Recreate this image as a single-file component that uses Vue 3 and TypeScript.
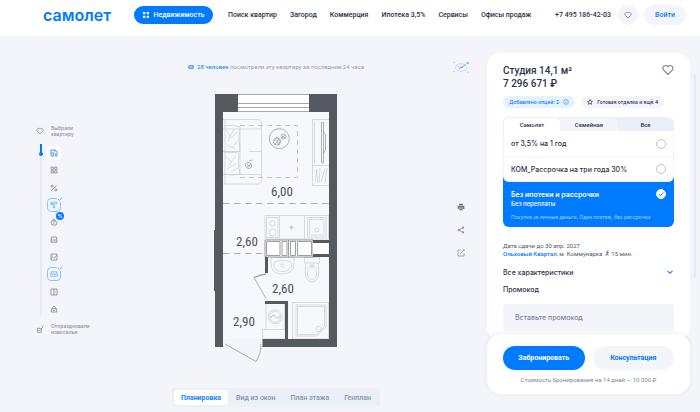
<script setup lang="ts">
import { ref } from 'vue'

const nav: string[] = ['Поиск квартир', 'Загород', 'Коммерция', 'Ипотека 3,5%', 'Сервисы', 'Офисы продаж']
const views: string[] = ['Планировка', 'Вид из окон', 'План этажа', 'Генплан']
const programs: string[] = ['Самолет', 'Семейная', 'Все']
const payments: string[] = ['от 3,5% на 1 год', 'КОМ_Рассрочка на три года 30%']

const view = ref('Планировка')
const program = ref('Самолет')
const payment = ref('full')
const promo = ref('')

interface Step { id: string; label: string; state?: 'current' | 'done'; badge?: boolean; d: string }
const steps: Step[] = [
  { id: 'plan', label: 'Планировка', state: 'current', d: 'M5 10.5H1.5V1.5H7V4M1.5 6H5M7 6.5H5V10.5M7 1.5L10.5 4V10.5H8V7' },
  { id: 'grid', label: 'Варианты', d: 'M1.5 1.5H5V5H1.5ZM7 1.5H10.5V5H7ZM1.5 7H5V10.5H1.5ZM7 7H10.5V10.5H7Z' },
  { id: 'percent', label: 'Ипотека', d: 'M10 2L2 10M3.2 1.6A1.6 1.6 0 1 0 3.2 4.8A1.6 1.6 0 1 0 3.2 1.6M8.8 7.2A1.6 1.6 0 1 0 8.8 10.4A1.6 1.6 0 1 0 8.8 7.2' },
  { id: 'finish', label: 'Отделка', state: 'done', d: 'M2.5 1.5H10.5V4H2.5ZM2.5 2.7H1V5.5H6V7M5 7H7V10.5H5Z' },
  { id: 'bonus', label: 'Выгода', badge: true, d: 'M3 4.5H9L10.5 7L9 10.5H3L1.5 7ZM4 4.5L5 2H7L8 4.5M4.5 7.5H7.5' },
  { id: 'transport', label: 'Транспорт', d: 'M2.5 1.5H9.5L10.5 7V9H1.5V7ZM1.5 6H10.5M3 9V10.8M9 9V10.8' },
  { id: 'view', label: 'Вид из окна', d: 'M1.5 1.5H10.5V10.5H1.5ZM1.5 8L4.5 5.5L6.5 7.5L10 3.5M3 3.5H4' },
  { id: 'furniture', label: 'Мебель', state: 'done', d: 'M2 5V2.5H10V5M1 5H3V7H9V5H11V9.5H1ZM6 2.5V7' },
  { id: 'door', label: 'Вход', d: 'M1.5 1.5H10.5V10.5H1.5ZM6 1.5V10.5M7.8 6H8.6' },
  { id: 'deal', label: 'Сделка', d: 'M2 5.5H10V10.5H2ZM4 5.5V3.5L6 1.5L8 3.5V5.5M4.5 8H7.5' },
]
</script>

<template>
  <div class="page">
    <header class="header">
      <a class="logo" href="#">самолет</a>
      <button class="estate" type="button">
        <svg class="ico6" viewBox="0 0 6 6" aria-hidden="true"><path fill="#fff" d="M0 0H2.3V2.3H0ZM3.7 0H6V2.3H3.7ZM0 3.7H2.3V6H0ZM3.7 3.7H6V6H3.7Z" /></svg>
        Недвижимость
      </button>
      <nav class="nav">
        <a v-for="item in nav" :key="item" href="#">{{ item }}</a>
      </nav>
      <a class="phone" href="tel:+74951864203">+7 495 186-42-03</a>
      <button class="fav" type="button" aria-label="Избранное">
        <svg class="ico8" viewBox="0 0 12 12" aria-hidden="true"><path class="line" d="M6 10.5L1.8 6.2A2.6 2.6 0 0 1 6 3A2.6 2.6 0 0 1 10.2 6.2Z" /></svg>
      </button>
      <button class="login" type="button">Войти</button>
    </header>

    <main class="main">
      <section class="stage">
        <div class="path">
          <p class="milestone">
            <svg class="ico8" viewBox="0 0 12 12" aria-hidden="true"><path class="line" d="M6 10.5L1.8 6.2A2.6 2.6 0 0 1 6 3A2.6 2.6 0 0 1 10.2 6.2Z" /></svg>
            <span>Выбрали<br>квартиру</span>
          </p>
          <div class="track">
            <div class="rail"><span class="progress"></span></div>
            <ol class="steps">
              <li v-for="s in steps" :key="s.id">
                <button type="button" class="step" :class="s.state" :aria-label="s.label">
                  <svg class="ico8" viewBox="0 0 12 12" aria-hidden="true"><path class="line" :d="s.d" /></svg>
                  <svg v-if="s.state === 'done'" class="tick" viewBox="0 0 6 6" aria-hidden="true"><path d="M1 3L2.5 4.5L5.5 1" /></svg>
                  <span v-if="s.badge" class="badge">%</span>
                </button>
              </li>
            </ol>
          </div>
          <p class="milestone">
            <svg class="ico8" viewBox="0 0 12 12" aria-hidden="true"><path class="line" d="M2 5H8V11H2ZM3.5 7.5L5 9L10 3.5M8.5 1.5L10.5 3.5M11 1V2" /></svg>
            <span>Отпраздновали<br>новоселье</span>
          </p>
        </div>

        <div class="viewer">
          <p class="watchers">
            <svg class="ico6" viewBox="0 0 6 6" aria-hidden="true"><ellipse cx="3" cy="3" rx="2.9" ry="2.3" fill="#4a9dfb" /><circle cx="3" cy="3" r="1.2" fill="none" stroke="#f4f5fb" stroke-width=".6" /></svg>
            <span><b>28 человек</b> посмотрели эту квартиру за последние 24 часа</span>
          </p>

          <svg class="plan" viewBox="213 92 126 272" role="img" aria-label="План студии">
            <path fill="#f7f8fd" d="M223 112H329V339H223Z" />
            <path fill="#fff" d="M238 94H309V112H238Z" />
            <g fill="none" stroke="#7d818c" stroke-width=".7">
              <path d="M238 94.5H309M238 103.5H309M238 107.5H309M238 111.5H309" />
            </g>
            <g fill="none" stroke="#c3c6cf" stroke-width=".6">
              <path d="M223 119.5H258Q261.5 119.5 261.5 123V180Q261.5 184 258 184H223M223 129H259Q261.5 129 261.5 125M223 174.5H259Q261.5 174.5 261.5 178M240 129V174.5M223 151.5H240M249 151.5H261.5" />
              <path d="M224 126Q233 124 240 127Q238 139 240 151Q232 154 224 151M224 153Q234 150 239 154Q237 165 240 174Q231 176 224 174M226 130L230 136M234 129L228 141M237 132L231 138M227 145L235 149M238 140L232 148M225 156L232 162M236 156L228 166M227 169L236 164M231 172L238 168M225 120V184" />
              <path d="M312.500 119.500H329M312.500 119.500V185.500H329M312.500 165.500H329M314.500 121.500V163.500" />
              <path d="M315 183L317 169M319 183L320 168M321 182L325 169M325 183L327 168M316 169L318 183" />
              <path d="M265 215.500H328.500V239H265ZM279.500 215.500V239M304.500 215.500V239M307.500 217.500H326V237H307.500ZM309.500 219.500H324V235H309.500ZM266.500 217.500H278V237.500H266.500Z" />
              <circle cx="272.500" cy="223.500" r="2.800" /><circle cx="272.500" cy="232.500" r="3.600" /><circle cx="291.500" cy="227.500" r="1.300" /><path d="M289 227.500H294M291.500 225V230" />
              <circle cx="316.800" cy="230" r="2" />
              <path d="M271 257.500H294V263Q294 274 282.500 274Q271 274 271 263ZM273.500 264Q274 260.500 282.500 260.500Q291 260.500 292 264Q291 271.500 282.500 271.500Q274 271.500 273.500 264" />
              <circle cx="282.500" cy="265.500" r="1.700" />
              <path d="M304.500 257.500H319.500V263H304.500ZM306 263Q304 274 307 279Q312 285 317 279Q320 274 318 263" /><ellipse cx="312" cy="272.500" rx="4.700" ry="7" /><circle cx="312" cy="266" r="1.500" />
              <path d="M266 304V329M284.500 304V329M262.500 329.500H285V339H262.500Z" />
              <circle cx="275.300" cy="316.700" r="7" /><circle cx="275.300" cy="316.700" r="5.400" /><path stroke="#8f939e" d="M270.500 318Q273 313.500 275.300 316.700T280 315.500" />
              <path d="M292.500 302.500H328.500V339H292.500ZM296 305H326V327L317 336H296Z" /><path d="M297.500 306.500H324.500V326.500L316.500 334.500H297.500Z" /><circle cx="318.500" cy="329" r="2.600" />
            </g>
            <path fill="none" stroke="#b9bcc6" stroke-width=".8" stroke-dasharray="5 4" d="M240 125.500H297.500V177.500H240" />
            <g fill="none" stroke="#8f939e" stroke-width=".7">
              <circle cx="279.300" cy="138.700" r="10" /><circle cx="277" cy="141.500" r="3.600" /><circle cx="283.500" cy="136.500" r="2.500" />
              <path d="M274 141Q277 138 278 143T280 140M275 144L279 139M282 136L285 138M282 138L285 135M276 137L279 139" />
              <path d="M245 164Q248 161 251 163.500Q253 166 250 168.500Q246 169 245 164M247 164L250 167M249 161L252 160M247 167L251 164" />
              <path d="M321.500 122.500H323.500V163H321.500ZM323.500 132L325.500 135V150L323.500 153" />
            </g>
            <path fill="none" stroke="#999da7" stroke-width=".8" stroke-dasharray="6.500 4.500" d="M223 203.500H329M223 253.500H265" />
            <path fill="none" stroke="#8a8e98" stroke-width=".7" d="M266 274L254 277.500L266 298.500M254 277.500Q260 274 266 274M225 344L256 361.500Q261 354 261 344" />
            <path fill="#fff" stroke="#7b7f89" stroke-width=".8" d="M265 240H313V257H265Z" />
            <path fill="none" stroke="#9c9fa8" stroke-width="1" d="M266.500 241.500H280V255.500H266.500ZM282 241.500H287V255.500H282ZM290.500 241.500H295.500V255.500H290.500ZM297.500 241.500H311.500V255.500H297.500ZM288.500 240V257" />
            <path fill="#fff" d="M313 243H329V254H313Z" />
            <path fill="#555960" d="M215 94H238V112H223V347H215V291H214V230H215ZM309 94H337V347H262.500V339H285V304H265V301H288V339H329V257H313V254H329V243H313V240H329V112H309ZM265 257H268V273H265Z" />
            <g class="size">
              <text x="282" y="196">6,00</text>
              <text x="247" y="246">2,60</text>
              <text x="283" y="293">2,60</text>
              <text x="244" y="326">2,90</text>
            </g>
          </svg>

          <div class="views" role="tablist">
            <button v-for="v in views" :key="v" type="button" role="tab" :aria-selected="view === v" :class="{ on: view === v }" @click="view = v">{{ v }}</button>
          </div>
        </div>

        <div class="tools">
          <svg class="compass" viewBox="0 0 18 14" aria-label="Стороны света">
            <ellipse cx="9" cy="7.500" rx="6" ry="3.700" fill="none" stroke="#c5d3e6" stroke-width=".8" />
            <path fill="none" stroke="#b8c4d8" stroke-width=".7" d="M4 5L8 8M1 11.500H3M1.500 2.500H3M15 12L16.500 12.500" />
            <path fill="none" stroke="#5ba8fb" stroke-width=".9" d="M7 8.500L14 4.500M8 7L11 8M15.500 2V4M14.500 3H17" />
          </svg>
          <button type="button" aria-label="Печать"><svg class="ico8" viewBox="0 0 12 12"><path fill="#6f7791" d="M3 1H9V3.500H3ZM1 4H11V9H9V7H3V9H1ZM3.500 8H8.500V11H3.500Z" /></svg></button>
          <button type="button" aria-label="Поделиться"><svg class="ico8" viewBox="0 0 12 12"><path class="line" d="M9 2.500L3 6L9 9.500" /><circle cx="9" cy="2.500" r="1.700" fill="#8a91a8" /><circle cx="3" cy="6" r="1.900" fill="#8a91a8" /><circle cx="9" cy="9.500" r="1.700" fill="#8a91a8" /></svg></button>
          <button type="button" aria-label="Изменить"><svg class="ico8" viewBox="0 0 12 12"><path class="line" d="M6 1.500H1.500V10.500H10.500V6M5 7L10.500 1.500M5 7L4.500 8M9 1H11V3" /></svg></button>
        </div>
      </section>

      <aside class="side">
        <div class="card">
          <div class="head">
            <h1>Студия 14,1 м²<br>7 296 671 &#8381;</h1>
            <button class="like" type="button" aria-label="В избранное"><svg viewBox="0 0 12 12"><path class="line" d="M6 10.500L1.500 5.800A2.700 2.700 0 0 1 6 2.700A2.700 2.700 0 0 1 10.500 5.800Z" /></svg></button>
          </div>
          <div class="chips">
            <button class="chip blue" type="button">Добавлено опций: 2
              <svg class="ico6" viewBox="0 0 12 12" aria-hidden="true"><circle cx="6" cy="6" r="4.800" fill="none" stroke="#007bff" /><path stroke="#007bff" d="M6 5.500V9M6 3V4.200" /></svg>
            </button>
            <button class="chip" type="button">
              <svg class="ico6" viewBox="0 0 12 12" aria-hidden="true"><path fill="none" stroke="#2c3246" stroke-width="1.400" d="M6 1L7.500 4.400L11 4.700L8.400 7.100L9.200 10.700L6 8.800L2.800 10.700L3.600 7.100L1 4.700L4.500 4.400Z" /></svg>
              Готовая отделка и ещё 4</button>
          </div>

          <div class="pay">
            <div class="programs" role="tablist">
              <button v-for="p in programs" :key="p" type="button" role="tab" :aria-selected="program === p" :class="{ on: program === p }" @click="program = p">{{ p }}</button>
            </div>
            <div class="options">
              <label v-for="p in payments" :key="p" class="option"><span>{{ p }}</span><input v-model="payment" type="radio" name="pay" :value="p"></label>
            </div>
            <label class="full">
              <span class="fulltop"><b>Без ипотеки и рассрочки</b>
                <span class="radio"><input v-model="payment" type="radio" name="pay" value="full"><svg viewBox="0 0 10 10" aria-hidden="true"><path d="M2.800 5.200L4.400 6.700L7.300 3.700" /></svg></span>
              </span>
              <strong>Без переплаты</strong>
              <small>Покупка за личные деньги. Один платеж, без рассрочки</small>
            </label>
          </div>

          <p class="facts">Дата сдачи до 30 апр. 2027<br><a href="#">Ольховый Квартал</a>, м. Коммунарка
            <svg class="ico6" viewBox="0 0 6 6" aria-hidden="true"><path fill="none" stroke="#4c5268" stroke-width=".8" d="M4 .3V1M2 2.500L3.500 1.700L3.200 3.500L4.200 5.700M3.200 3.500L1.500 5.700M3.500 2L5 3" /></svg>
            15 мин.</p>
          <button class="specs" type="button">Все характеристики
            <svg class="ico8" viewBox="0 0 8 8" aria-hidden="true"><path fill="none" stroke="#1585ff" stroke-width="1.100" d="M1.500 2.800L4 5.200L6.500 2.800" /></svg>
          </button>
          <label class="promolabel" for="promo">Промокод</label>
          <input id="promo" v-model="promo" class="promo" type="text" placeholder="Вставьте промокод">
        </div>

        <div class="book">
          <div class="actions">
            <button class="primary" type="button">Забронировать</button>
            <button class="ghost" type="button">Консультация</button>
          </div>
          <p>Стоимость бронирования на 14 дней — 10 000 &#8381;</p>
        </div>
      </aside>
      <div class="scroll"></div>
    </main>
  </div>
</template>

<style>
body { background: #f4f5fb; }
</style>

<style scoped>
.page {
  min-height: 100vh;
  font-family: Inter, Roboto, "Liberation Sans", sans-serif;
  font-size: 7px;
  font-weight: 500;
  color: #2c3246;
  background: #f4f5fb;
}
* { box-sizing: border-box; }
button { padding: 0; border: 0; background: none; font: inherit; color: inherit; cursor: pointer; }
a { color: inherit; text-decoration: none; }
p, h1, ol { margin: 0; padding: 0; list-style: none; }
svg { display: block; flex: none; }
.ico6 { width: 6px; height: 6px; }
.ico8 { width: 8px; height: 8px; }
.line { fill: none; stroke: currentColor; stroke-width: 1.200; }
.estate, .nav, .phone, .login, .watchers, .views, .programs, .facts, .book, h1 {
  font-family: Roboto, Inter, "Liberation Sans", sans-serif;
}

.header {
  display: flex;
  align-items: center;
  height: 36px;
  padding: 0 14px 6px 43px;
  background: #fff;
  white-space: nowrap;
}
.logo { width: 66px; margin-right: 25px; font-size: 16px; line-height: 20px; font-weight: 600; color: #007bff; }
.estate {
  display: flex;
  flex: none;
  align-items: center;
  justify-content: center;
  gap: 5px;
  width: 79px;
  height: 18px;
  border-radius: 9px;
  background: #007bff;
  color: #fff;
  font-weight: 500;
}
.nav { display: flex; gap: 13px; margin-left: 15px; }
.phone { margin-left: auto; }
.fav {
  display: grid;
  flex: none;
  place-items: center;
  width: 20px;
  height: 20px;
  margin: 0 6px 0 7px;
  border-radius: 50%;
  background: #f4f5fb;
  color: #7d849d;
}
.login { flex: none; width: 42px; height: 20px; border-radius: 10px; background: #f4f5fb; color: #007bff; font-weight: 500; }

.main { display: flex; align-items: flex-start; }
.stage { flex: 1; display: grid; grid-template-columns: 105px 1fr 27px; padding-right: 13px; }

.path { padding: 89px 0 0 36px; color: #8a91a8; }
.milestone { display: flex; align-items: center; gap: 7px; font-size: 5px; line-height: 6px; font-weight: 500; }
.track { display: flex; gap: 5px; margin: 7px 0; padding-left: 4px; }
.rail { width: 2px; height: 172px; border-radius: 1px; background: #e3e9f6; }
.progress { display: block; width: 2px; height: 10px; background: #007bff; }
.progress::after { content: ""; display: block; width: 4px; height: 4px; border-radius: 50%; background: #007bff; transform: translate(-1px, 8px); }
.steps { display: flex; flex-direction: column; justify-content: space-between; padding-top: 2px; }
.steps li { height: 14px; }
.step { position: relative; display: grid; place-items: center; width: 14px; height: 14px; border-radius: 4px; color: #7d849d; }
.step.current { background: #fff; color: #1585ff; }
.step.done { border: 1px solid #8fc5fa; color: #7bbafb; background: #eef6fe; }
.tick { position: absolute; right: -3px; top: -3px; width: 6px; height: 6px; background: #f4f5fb; }
.tick path { fill: none; stroke: #5ba8fb; stroke-width: .8; }
.badge {
  position: absolute;
  right: -3px;
  top: -3px;
  width: 8px;
  height: 8px;
  border-radius: 50%;
  background: #007bff;
  color: #fff;
  font-size: 5px;
  line-height: 8px;
  font-weight: 700;
  text-align: center;
}

.viewer { display: flex; flex-direction: column; align-items: center; padding-top: 27px; }
.watchers { display: flex; align-items: center; gap: 3px; font-size: 6px; line-height: 8px; font-weight: 400; color: #969cb2; white-space: nowrap; }
.watchers b { font-weight: 500; color: #2e90fb; }
.plan { width: 126px; height: 272px; margin: 21px 0 24px; }
.size { font-family: "Roboto Condensed", "Liberation Sans Narrow", Roboto, sans-serif; font-size: 13px; font-weight: 400; fill: #4c5058; text-anchor: middle; }
.views { display: flex; gap: 1px; padding: 2px; border-radius: 4px; background: #ebeff8; color: #8a91a8; white-space: nowrap; }
.views button { height: 15px; padding: 0 7px; border-radius: 3px; }
.views .on { background: #fff; color: #1585ff; font-weight: 700; }

.tools { display: flex; flex-direction: column; align-items: center; gap: 15px; padding-top: 24px; color: #8a91a8; }
.compass { width: 18px; height: 14px; margin-bottom: 114px; }

.side { width: 203px; padding-top: 17px; }
.card { padding: 11px 16px 10px; border-radius: 14px; background: #fff; }
.head { display: flex; justify-content: space-between; }
h1 { font-size: 10px; line-height: 13px; font-weight: 500; }
.like { align-self: flex-start; color: #7d849d; }
.like svg { width: 12px; height: 12px; }
.chips { display: flex; gap: 6px; margin-top: 6px; font-size: 5px; white-space: nowrap; }
.chip { display: flex; align-items: center; gap: 4px; height: 12px; padding: 0 6px; border-radius: 6px; background: #f4f5fb; }
.chip.blue { background: #e6f2ff; color: #007bff; }
.pay { margin-top: 9px; }
.programs { display: grid; grid-template-columns: 56px 58px 1fr; height: 14px; border-radius: 6px 6px 0 0; background: #ebeff8; font-size: 6px; overflow: hidden; border: 1px solid #ebeff8; border-bottom: 0; font-weight: 500; }
.programs button { border-radius: 0 5px 0 0; }
.programs button:nth-child(-n+2) { background: #f4f5fb; }
.programs .on.on { background: #fff; }
.options { position: relative; border: 1px solid #f1f3fa; border-top: 0; border-radius: 0 5px 6px 6px; background: #fff; }
.option { display: flex; align-items: center; justify-content: space-between; height: 25px; padding: 0 7px; border-radius: 0 0 6px 6px; }
.option + .option { border-top: 1px solid #f1f3fa; }
.option input, .full input { appearance: none; width: 10px; height: 10px; margin: 0; border: 1px solid #bcc2d6; border-radius: 50%; background: #fff; }
.full { display: block; margin-top: -6px; padding: 13px 8px 6px; border-radius: 0 0 6px 6px; background: #007bff; color: #fff; }
.fulltop { display: flex; align-items: center; justify-content: space-between; height: 10px; }
.fulltop b { font-weight: 600; }
.radio { display: grid; }
.radio input { grid-area: 1 / 1; border-color: #fff; }
.radio svg { grid-area: 1 / 1; width: 10px; height: 10px; pointer-events: none; }
.radio path { fill: none; stroke: #007bff; stroke-width: 1; }
.full strong { display: block; font-size: 6px; line-height: 10px; font-weight: 500; }
.full small { display: block; margin-top: 4px; font-size: 5px; line-height: 8px; font-weight: 400; color: #a8d2ff; white-space: nowrap; }
.facts { margin-top: 15px; font-size: 6px; line-height: 8px; font-weight: 400; color: #4c5268; }
.facts a { color: #007bff; font-weight: 500; }
.facts svg { display: inline-block; }
.specs { display: flex; align-items: center; justify-content: space-between; width: 100%; height: 10px; margin-top: 9px; }
.promolabel { display: block; margin-top: 8px; line-height: 10px; }
.promo { display: block; width: 100%; height: 27px; margin-top: 9px; padding: 0 12px; border: 0; border-radius: 4px; background: #f4f5fb; font: inherit; color: inherit; }
.promo::placeholder { color: #7d849d; opacity: 1; }
.book { position: relative; margin-top: -7px; padding: 12px 16px 10px; border-radius: 14px; background: #fff; box-shadow: 0 -1px 4px rgba(60, 80, 130, .1); }
.actions { display: grid; grid-template-columns: 1fr 1fr; gap: 8px; font-weight: 700; }
.actions button { height: 24px; border-radius: 12px; }
.primary { background: #007bff; color: #fff; }
.ghost { background: #f4f5fb; color: #007bff; }
.book p { margin-top: 6px; font-size: 6px; line-height: 8px; font-weight: 400; color: #7d849d; text-align: center; }
.scroll { width: 2px; height: 204px; margin: 38px 4px 0; border-radius: 1px; background: #e3e9f6; }
</style>
